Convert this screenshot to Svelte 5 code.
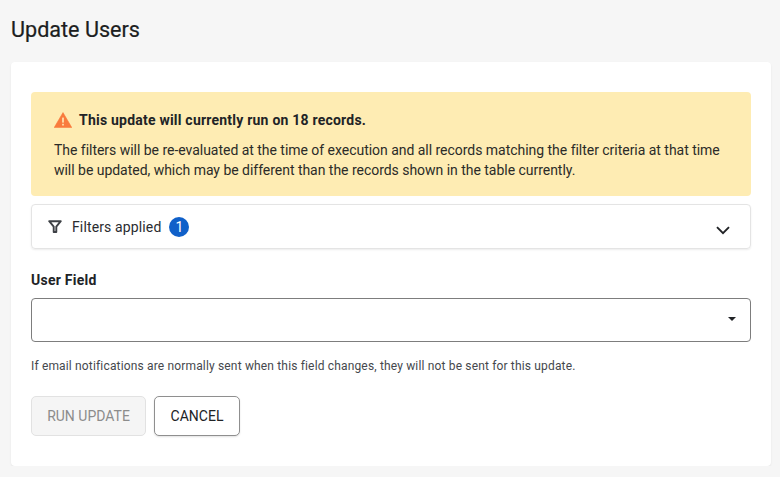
<script>
const title = 'Update Users';
</script>

<main class="page">
	<h1>{title}</h1>

	<section class="card">
		<div class="alert">
			<div class="alert-head">
				<svg class="warn" viewBox="0 0 18 16" width="18" height="16" aria-hidden="true">
					<path d="M9 0.6 L17.8 15.6 H0.2 Z" fill="#f97b3d" stroke="#f97b3d" stroke-linejoin="round" stroke-width="0.6" />
					<rect x="8.2" y="5.6" width="1.6" height="5" fill="#fdecb8" />
					<rect x="8.2" y="11.8" width="1.6" height="1.7" fill="#fdecb8" />
				</svg>
				<strong>This update will currently run on 18 records.</strong>
			</div>
			<p>The filters will be re-evaluated at the time of execution and all records matching the filter criteria at that time will be updated, which may be different than the records shown in the table currently.</p>
		</div>

		<div class="filters">
			<svg viewBox="0 0 14 13" width="14" height="13" aria-hidden="true">
				<path d="M1.2 1.2 H12.8 L8.3 6.6 V12 H5.7 V6.6 Z" fill="none" stroke="#3d4045" stroke-width="1.9" stroke-linejoin="round" />
			</svg>
			<span class="filters-label">Filters applied</span>
			<span class="badge">1</span>
			<svg class="chevron" viewBox="0 0 14 9" width="14" height="9" aria-hidden="true">
				<path d="M1 1.2 L7 7.2 L13 1.2" fill="none" stroke="#212326" stroke-width="1.9" />
			</svg>
		</div>

		<label class="field-label" for="user-field">User Field</label>
		<div class="select" id="user-field">
			<span class="caret"></span>
		</div>
		<p class="help">If email notifications are normally sent when this field changes, they will not be sent for this update.</p>

		<div class="actions">
			<button class="run" disabled>RUN UPDATE</button>
			<button class="cancel">CANCEL</button>
		</div>
	</section>
</main>

<style>
:global(body) {
	margin: 0;
	background: #f6f6f6;
	font-family: Roboto, "Liberation Sans", sans-serif;
	color: #212326;
}

.page {
	padding: 17px 9px 0 11px;
}

h1 {
	margin: 0 0 20px;
	font-size: 21.6px;
	line-height: 25px;
	font-weight: 400;
	color: #1c1e21;
	-webkit-text-stroke: 0.2px #1c1e21;
}

.card {
	background: #fff;
	border-radius: 4px;
	box-shadow: 0 1px 2px rgba(0, 0, 0, 0.08);
	padding: 30px 20px 30px;
	height: 404px;
	box-sizing: border-box;
}

.alert {
	background: #feecb3;
	border-radius: 4px;
	height: 104px;
	box-sizing: border-box;
	padding: 18px 23px 0;
}

.alert-head {
	display: flex;
	align-items: center;
	gap: 7px;
	height: 20px;
	font-size: 14px;
}

.alert-head strong {
	font-weight: 700;
	letter-spacing: 0.22px;
}

.alert p {
	margin: 10px 0 0;
	font-size: 14px;
	line-height: 20px;
	letter-spacing: -0.03px;
	color: #2b2b28;
}

.filters {
	display: flex;
	align-items: center;
	height: 45px;
	box-sizing: border-box;
	margin-top: 8px;
	padding: 0 20px 0 16px;
	border: 1px solid #e4e4e4;
	border-radius: 4px;
	box-shadow: 0 1px 2px rgba(0, 0, 0, 0.08);
}

.filters-label {
	margin-left: 10px;
	font-size: 14px;
	letter-spacing: 0.13px;
	color: #2a2c30;
}

.badge {
	width: 20px;
	height: 20px;
	margin-left: 8px;
	border-radius: 50%;
	background: #1060c9;
	color: #fff;
	font-size: 14px;
	line-height: 20px;
	text-align: center;
}

.chevron {
	margin-left: auto;
	margin-top: 8px;
}

.field-label {
	display: block;
	margin-top: 22px;
	font-size: 14px;
	line-height: 18px;
	font-weight: 700;
	letter-spacing: 0.25px;
	color: #212326;
}

.select {
	position: relative;
	height: 44px;
	box-sizing: border-box;
	margin-top: 9px;
	border: 1px solid #7d7d7d;
	border-radius: 4px;
}

.caret {
	position: absolute;
	right: 14px;
	top: 18px;
	border: 4.5px solid transparent;
	border-top-color: #212326;
	border-bottom: 0;
}

.help {
	margin: 16px 0 0;
	font-size: 12px;
	line-height: 16px;
	letter-spacing: 0.16px;
	color: #45484d;
}

.actions {
	display: flex;
	gap: 8px;
	margin-top: 22px;
}

button {
	height: 40px;
	box-sizing: border-box;
	border-radius: 5px;
	background: #fff;
	font-family: inherit;
	font-size: 14px;
	padding: 0;
}

.run {
	width: 115px;
	background: #f5f5f5;
	border: 1px solid #e2e2e2;
	color: #8c8c8c;
}

.cancel {
	width: 86px;
	border: 1px solid #8f8f8f;
	color: #212326;
	box-shadow: 0 1px 2px rgba(0, 0, 0, 0.12);
}
</style>
